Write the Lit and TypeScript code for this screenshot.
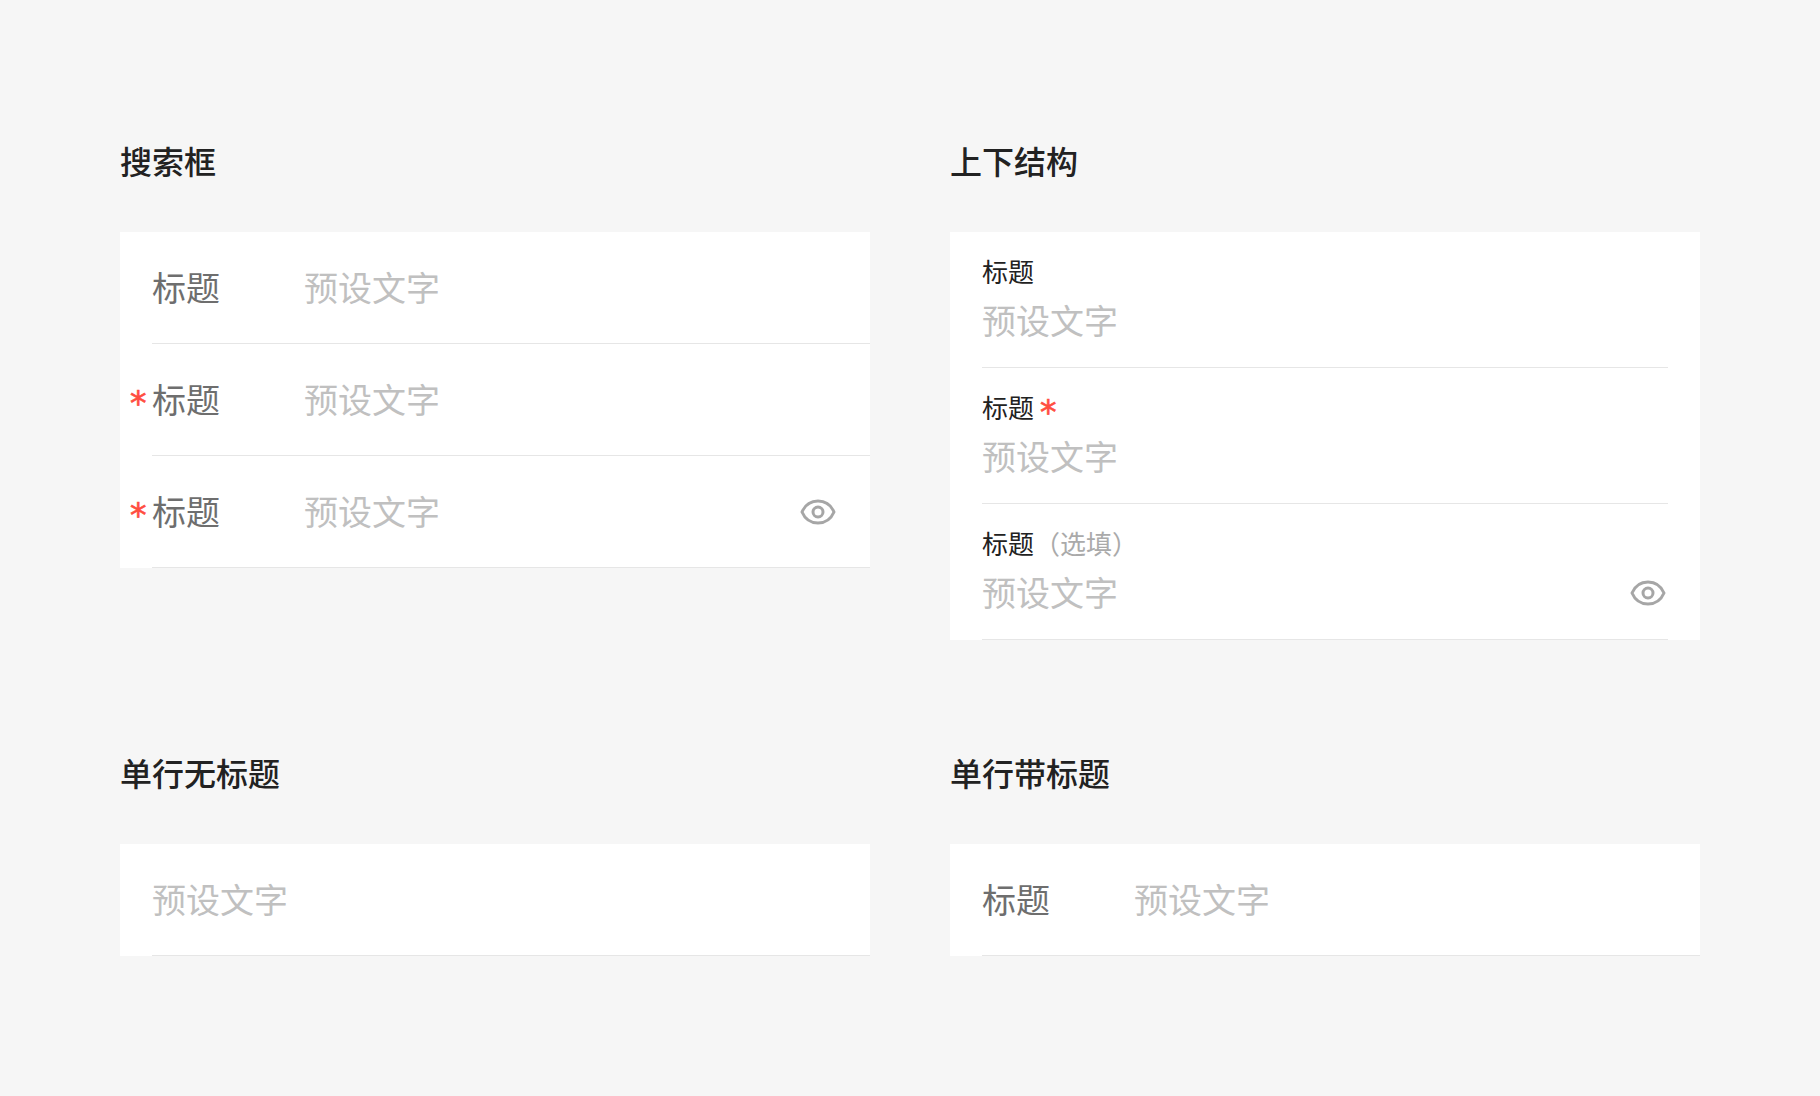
import { LitElement, html, css } from "lit";
import { customElement } from "lit/decorators.js";

const eye = html`<svg class="eye" viewBox="0 0 40 40" width="40" height="40" aria-hidden="true">
  <path d="M4 20C7 13 13 9 20 9S33 13 36 20C33 27 27 31 20 31S7 27 4 20Z" fill="none" stroke="#a6a6a6" stroke-width="3" stroke-linejoin="round"/>
  <circle cx="20" cy="20" r="5" fill="none" stroke="#a6a6a6" stroke-width="3"/>
</svg>`;

@customElement("app-root")
export class AppRoot extends LitElement {
  static styles = css`
    :host {
      display: block;
      min-height: 1096px;
      box-sizing: border-box;
      background: #f6f6f6;
      padding: 140px 120px 0;
      font-family: "Noto Sans CJK SC", "Noto Sans", sans-serif;
    }
    .grid {
      display: grid;
      grid-template-columns: 750px 750px;
      column-gap: 80px;
      row-gap: 112px;
      align-items: start;
    }
    h2 {
      margin: 0 0 52px;
      font-size: 32px;
      line-height: 40px;
      font-weight: 500;
      color: #222;
    }
    .card { background: #fff; }
    .row {
      display: flex;
      align-items: center;
      height: 112px;
      box-sizing: border-box;
      margin-left: 32px;
      padding: 0 32px 2px 0;
      border-bottom: 1px solid #e6e6e6;
    }
    .label {
      position: relative;
      width: 152px;
      flex: none;
      font-size: 34px;
      line-height: 44px;
      color: #6e6e6e;
    }
    .req {
      position: absolute;
      left: -22px;
      top: 5px;
      font-family: "DejaVu Sans", sans-serif;
      font-size: 33px;
      line-height: 44px;
      color: #ff4d3f;
      -webkit-text-stroke: 0.7px #ff4d3f;
    }
    .ph {
      flex: 1;
      font-size: 34px;
      line-height: 44px;
      color: #c0c0c0;
    }
    .eye { display: block; flex: none; margin-top: 2px; }
    .stack {
      height: 136px;
      box-sizing: border-box;
      margin: 0 32px;
      padding-top: 24px;
      border-bottom: 1px solid #e6e6e6;
    }
    .stack-label {
      display: flex;
      align-items: center;
      font-size: 26px;
      line-height: 30px;
      color: #222;
    }
    .stack-req {
      margin-left: 6px;
      font-family: "DejaVu Sans", sans-serif;
      font-size: 33px;
      line-height: 30px;
      height: 30px;
      position: relative;
      top: 6px;
      color: #ff4d3f;
      -webkit-text-stroke: 0.7px #ff4d3f;
    }
    .opt { color: #aaa; }
    .stack-body {
      display: flex;
      align-items: center;
      margin-top: 12px;
    }
  `;

  private row(req: boolean, withEye: boolean) {
    return html`<div class="row">
      <div class="label">${req ? html`<span class="req">*</span>` : ""}标题</div>
      <div class="ph">预设文字</div>
      ${withEye ? eye : ""}
    </div>`;
  }

  private stack(extra: unknown, withEye = false) {
    return html`<div class="stack">
      <div class="stack-label">标题${extra}</div>
      <div class="stack-body"><div class="ph">预设文字</div>${withEye ? eye : ""}</div>
    </div>`;
  }

  render() {
    return html`<div class="grid">
      <section>
        <h2>搜索框</h2>
        <div class="card">
          ${this.row(false, false)}${this.row(true, false)}${this.row(true, true)}
        </div>
      </section>
      <section>
        <h2>上下结构</h2>
        <div class="card">
          ${this.stack("")}
          ${this.stack(html`<span class="stack-req">*</span>`)}
          ${this.stack(html`<span class="opt">（选填）</span>`, true)}
        </div>
      </section>
      <section>
        <h2>单行无标题</h2>
        <div class="card">
          <div class="row"><div class="ph">预设文字</div></div>
        </div>
      </section>
      <section>
        <h2>单行带标题</h2>
        <div class="card">${this.row(false, false)}</div>
      </section>
    </div>`;
  }
}
